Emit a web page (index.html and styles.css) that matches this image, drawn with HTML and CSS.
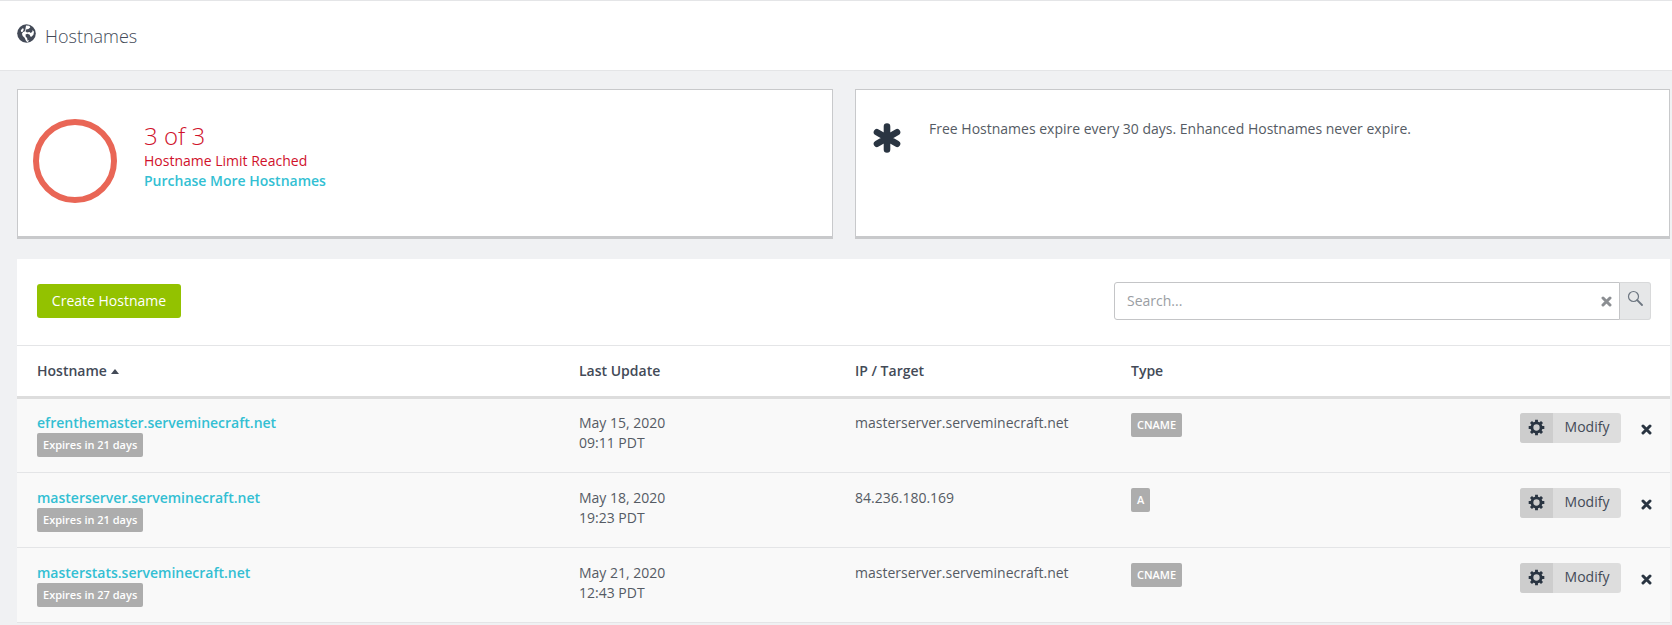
FILE: index.html
```html
<!DOCTYPE html>
<html lang="en">
<head>
  <meta charset="UTF-8">
  <meta name="viewport" content="width=device-width, initial-scale=1.0">
  <title>Hostnames</title>
  <link rel="stylesheet" href="styles.css">
</head>
<body>
  <svg class="icon-defs" width="0" height="0" aria-hidden="true">
    <symbol id="icon-cog" viewBox="0 0 20 20">
      <circle cx="10" cy="10" r="5.4" fill="none" stroke="currentColor" stroke-width="3.4"/>
      <g stroke="currentColor" stroke-width="3.4" stroke-linecap="butt">
        <path d="M10 .8v3.400M10 15.800v3.400M.8 10h3.400M15.800 10h3.400M3.500 3.500l2.400 2.400M14.100 14.100l2.400 2.400M3.500 16.500l2.400-2.400M14.100 5.900l2.400-2.400"/>
      </g>
    </symbol>
    <symbol id="icon-times" viewBox="0 0 12 12">
      <path d="M2.200 2.200l7.600 7.600M9.800 2.200l-7.600 7.600" stroke="currentColor" stroke-width="3.3" stroke-linecap="round" fill="none"/>
    </symbol>
  </svg>

  <header class="page-header">
    <svg class="globe-icon" viewBox="0 0 20 20">
      <circle cx="10" cy="10" r="9.800" fill="#434a57"/>
      <path d="M9.500 1.500l3.500.3 1 2-2 1.500-2.500.4-.6 1.800 1.600 1.500 2.500-.7 1.500 1.100 1.600-1.200.4-2 1.400 2-.6 3-2.100 2.200-1.200-.2-.6-2-2.400-.9-2 .8.2 2.200 1.400 1.500.6 2.700 1.200-.5.4.6-2 1.600-1.500-1.800-1.300-3-2-1.700-.8-2.400 1.200-1.900 1.600-.6.800-1.900z" fill="#fff"/>
      <path d="M4 6.500l2.300-2.200.8 1.500-1 2.300-1.700.2z" fill="#fff"/>
    </svg>
    <h1>Hostnames</h1>
  </header>

  <div class="summary">
    <section class="card usage-card">
      <svg class="usage-ring" viewBox="0 0 84 84">
        <circle cx="42" cy="42" r="39" fill="none" stroke="#e96656" stroke-width="6"/>
      </svg>
      <div class="usage-text">
        <div class="usage-count">3 of 3</div>
        <div class="usage-limit">Hostname Limit Reached</div>
        <a class="usage-link" href="#">Purchase More Hostnames</a>
      </div>
    </section>
    <section class="card note-card">
      <svg class="note-icon" viewBox="0 0 28 30">
        <g stroke="#2a3542" stroke-width="6.600" stroke-linecap="round">
          <path d="M14 3.500v23M4 9.250l20 11.500M24 9.250l-20 11.500"/>
        </g>
      </svg>
      <p>Free Hostnames expire every 30 days. Enhanced Hostnames never expire.</p>
    </section>
  </div>

  <main class="panel">
    <div class="toolbar">
      <a class="btn-create" href="#">Create Hostname</a>
      <div class="search">
        <div class="search-field">
          <span class="search-placeholder">Search...</span>
          <svg class="search-clear"><use href="#icon-times"/></svg>
        </div>
        <button class="search-btn" type="button">
          <svg viewBox="0 0 16 16" width="16" height="16">
            <circle cx="6.500" cy="6.500" r="5" fill="none" stroke="#6d7680" stroke-width="1.200"/>
            <path d="M10.200 10.200l4.800 4.800" stroke="#6d7680" stroke-width="1.800" stroke-linecap="round"/>
          </svg>
        </button>
      </div>
    </div>

    <div class="row row-head">
      <div>Hostname <span class="sort-caret"></span></div>
      <div>Last Update</div>
      <div>IP / Target</div>
      <div>Type</div>
    </div>

    <div class="row row-body">
      <div>
        <a class="host-link" href="#">efrenthemaster.serveminecraft.net</a>
        <span class="label">Expires in 21 days</span>
      </div>
      <div>May 15, 2020<br>09:11 PDT</div>
      <div>masterserver.serveminecraft.net</div>
      <div><span class="label label-type">CNAME</span></div>
      <div class="row-actions">
        <a class="btn-modify" href="#"><span class="btn-modify-icon"><svg><use href="#icon-cog"/></svg></span><span class="btn-modify-text">Modify</span></a>
        <svg class="row-delete"><use href="#icon-times"/></svg>
      </div>
    </div>

    <div class="row row-body">
      <div>
        <a class="host-link" href="#">masterserver.serveminecraft.net</a>
        <span class="label">Expires in 21 days</span>
      </div>
      <div>May 18, 2020<br>19:23 PDT</div>
      <div>84.236.180.169</div>
      <div><span class="label label-type">A</span></div>
      <div class="row-actions">
        <a class="btn-modify" href="#"><span class="btn-modify-icon"><svg><use href="#icon-cog"/></svg></span><span class="btn-modify-text">Modify</span></a>
        <svg class="row-delete"><use href="#icon-times"/></svg>
      </div>
    </div>

    <div class="row row-body">
      <div>
        <a class="host-link" href="#">masterstats.serveminecraft.net</a>
        <span class="label">Expires in 27 days</span>
      </div>
      <div>May 21, 2020<br>12:43 PDT</div>
      <div>masterserver.serveminecraft.net</div>
      <div><span class="label label-type">CNAME</span></div>
      <div class="row-actions">
        <a class="btn-modify" href="#"><span class="btn-modify-icon"><svg><use href="#icon-cog"/></svg></span><span class="btn-modify-text">Modify</span></a>
        <svg class="row-delete"><use href="#icon-times"/></svg>
      </div>
    </div>
  </main>
</body>
</html>
```
FILE: styles.css
```css
* {
  box-sizing: border-box;
}

body {
  margin: 0;
  height: 625px;
  overflow: hidden;
  background-color: #f0f1f3;
  font-family: "Open Sans", sans-serif;
  font-size: 14px;
  line-height: 20px;
  color: #555b64;
}

a {
  text-decoration: none;
}

.icon-defs {
  display: block;
}

.page-header {
  display: flex;
  align-items: flex-start;
  height: 71px;
  padding: 23px 0 0 17px;
  background-color: #fff;
  border-top: 1px solid #e4e5e7;
  border-bottom: 1px solid #e4e5e7;
}

.globe-icon {
  width: 19px;
  height: 19px;
}

.page-header h1 {
  margin: 0 0 0 9px;
  font-size: 18px;
  font-weight: 300;
  line-height: 24px;
  color: #434a57;
}

.summary {
  display: flex;
  gap: 22px;
  padding: 18px 2px 0 17px;
}

.card {
  display: flex;
  height: 150px;
  background-color: #fff;
  border: 1px solid #c8c9cb;
  border-bottom-width: 3px;
}

.usage-card {
  width: 816px;
  padding: 29px 0 0 15px;
}

.usage-ring {
  width: 84px;
  height: 84px;
}

.usage-text {
  margin: 1px 0 0 27px;
}

.usage-count {
  font-size: 24px;
  font-weight: 300;
  line-height: 31px;
  color: #d0112b;
}

.usage-limit {
  color: #d0112b;
}

.usage-link {
  font-weight: 600;
  color: #33bfd3;
}

.note-card {
  flex: 1;
  padding: 29px 0 0 17px;
}

.note-icon {
  width: 28px;
  height: 30px;
  margin-top: 4px;
}

.note-card p {
  margin: 0 0 0 28px;
  color: #555b64;
}

.panel {
  margin: 20px 2px 0 17px;
  background-color: #fff;
}

.toolbar {
  display: flex;
  justify-content: space-between;
  height: 87px;
  padding: 25px 19px 0 20px;
  border-bottom: 1px solid #e4e5e7;
}

.btn-create {
  width: 144px;
  height: 34px;
  background-color: #93c200;
  border-radius: 3px;
  font-size: 14px;
  line-height: 33px;
  text-align: center;
  color: #fff;
}

.search {
  display: flex;
  width: 537px;
  height: 38px;
  margin-top: -2px;
}

.search-field {
  flex: 1;
  display: flex;
  align-items: center;
  justify-content: space-between;
  padding: 0 7px 0 12px;
  border: 1px solid #c4c5c7;
  border-radius: 3px 0 0 3px;
}

.search-placeholder {
  color: #9a9ea3;
}

.search-clear {
  width: 11px;
  height: 11px;
  color: #8b8e92;
}

.search-btn {
  width: 31px;
  padding: 0 0 3px;
  background-color: #e6e7e8;
  border: 1px solid #d8d9da;
  border-left: 0;
  border-radius: 0 3px 3px 0;
}

.row {
  display: grid;
  grid-template-columns: 542px 276px 276px 1fr;
  padding-left: 20px;
}

.row-head {
  height: 53px;
  align-items: center;
  font-weight: 600;
  color: #434a57;
  border-bottom: 3px solid #dddddd;
}

.sort-caret {
  display: inline-block;
  margin-left: 0;
  vertical-align: 2px;
  border-left: 4px solid transparent;
  border-right: 4px solid transparent;
  border-bottom: 5px solid #434a57;
}

.row-body {
  position: relative;
  height: 75px;
  padding-top: 15px;
  background-color: #f9f9f9;
  border-bottom: 1px solid #e4e5e7;
}

/* first row starts under the thick header line */
.row-head + .row-body {
  height: 74px;
  padding-top: 14px;
}

.host-link {
  display: block;
  font-weight: 600;
  color: #33bfd3;
}

.label {
  display: inline-block;
  height: 24px;
  padding: 0 6px;
  background-color: #adadad;
  border-radius: 2px;
  font-size: 11px;
  font-weight: 600;
  line-height: 24px;
  color: #fff;
  vertical-align: top;
}

.row-actions {
  position: absolute;
  top: 15px;
  right: 18px;
  display: flex;
  align-items: flex-start;
}

.row-head + .row-body .row-actions {
  top: 14px;
}

.btn-modify {
  display: flex;
  width: 101px;
  height: 30px;
  background-color: #dddddd;
  border-radius: 3px;
  overflow: hidden;
  color: #434a57;
}

.btn-modify-icon {
  display: flex;
  align-items: center;
  justify-content: center;
  width: 33px;
  padding-bottom: 2px;
  background-color: #cdcdcd;
  color: #2a3542;
}

.btn-modify-icon svg {
  width: 17px;
  height: 17px;
}

.btn-modify-text {
  flex: 1;
  line-height: 27px;
  text-align: center;
}

.row-delete {
  width: 11px;
  height: 11px;
  margin: 11px 0 0 20px;
  color: #2a3542;
}
```
